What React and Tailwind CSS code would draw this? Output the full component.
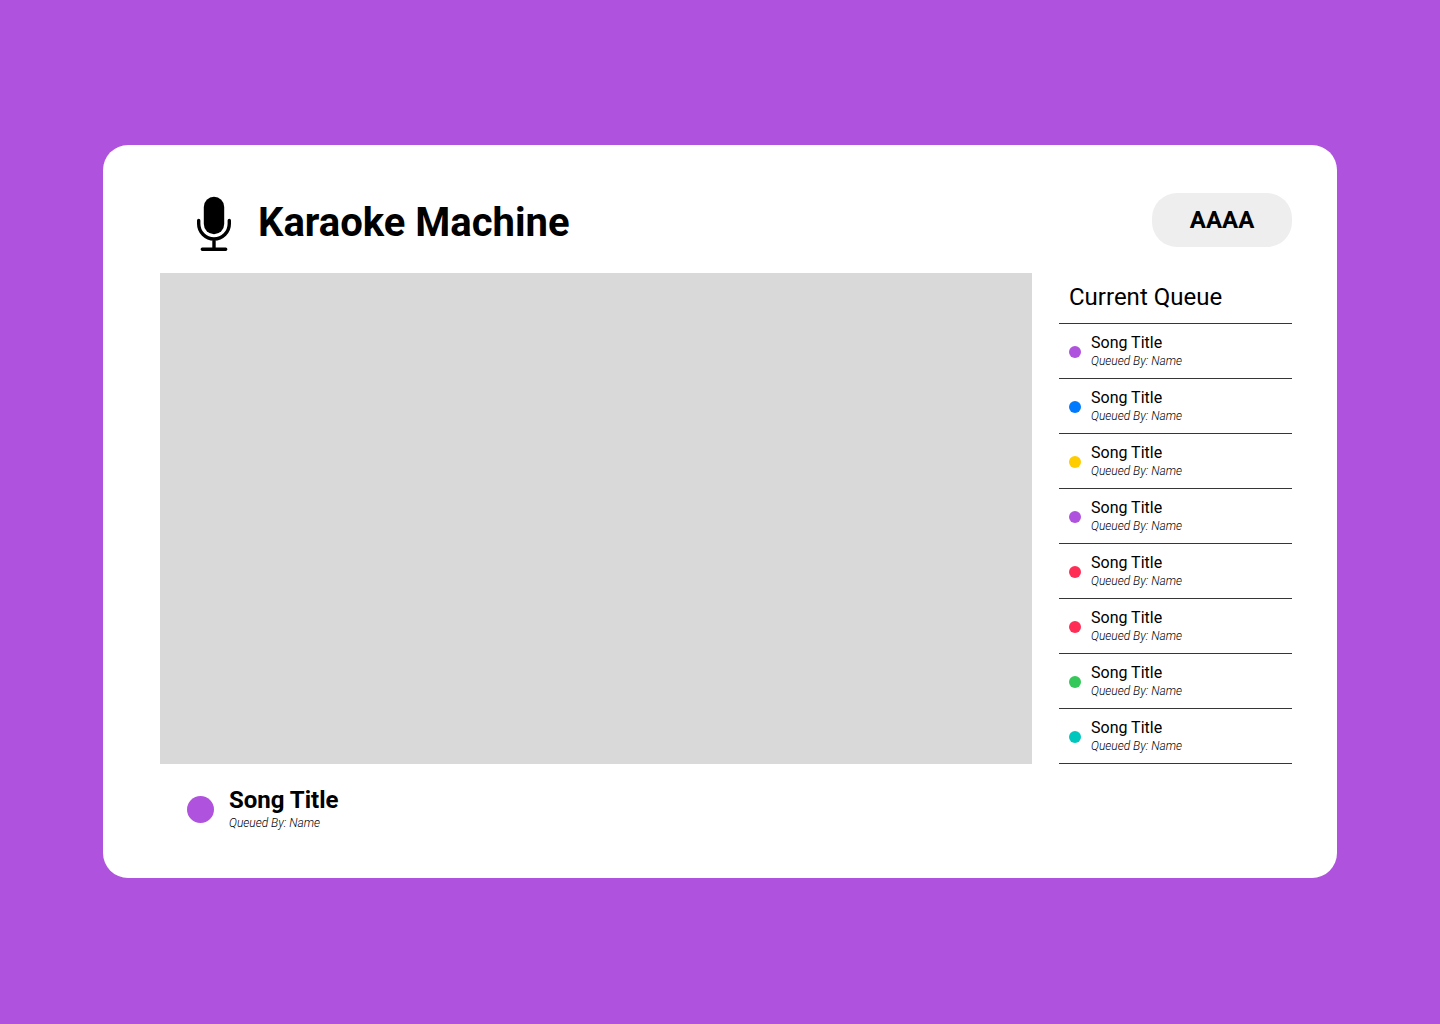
const queue = [
  "bg-[#af52de]",
  "bg-[#007aff]",
  "bg-[#ffcc00]",
  "bg-[#af52de]",
  "bg-[#ff2d55]",
  "bg-[#ff2d55]",
  "bg-[#34c759]",
  "bg-[#00c7be]",
].map((color, id) => ({ id, color, title: "Song Title", name: "Name" }));

function MicIcon() {
  return (
    <svg className="h-14 w-9 shrink-0" viewBox="0 0 36 56" fill="none" aria-hidden="true">
      <rect x="7.8" y="1.8" width="20.4" height="37.4" rx="10.2" fill="#000" />
      <path
        d="M2.7 25.5v3.2a15.3 15.3 0 0 0 30.6 0v-3.2M18 44v10M6.3 54.2h23.4"
        stroke="#000"
        strokeWidth="3.4"
        strokeLinecap="round"
      />
    </svg>
  );
}

function QueueItem({ song }) {
  return (
    <li className="flex h-[55px] items-center gap-2.5 border-b border-[#363636] px-2.5">
      <span className={`mt-0.5 size-3 shrink-0 rounded-full ${song.color}`} />
      <div>
        <p className="text-base leading-5">{song.title}</p>
        <p className="text-xs leading-4 font-light italic">Queued By: {song.name}</p>
      </div>
    </li>
  );
}

export default function App() {
  return (
    <div className="flex min-h-screen flex-col bg-[#af52de] px-[103px] py-[145px] font-['Roboto',sans-serif] text-black">
      <main className="rounded-[25px] bg-white pt-12 pr-[45px] pb-[47px] pl-[57px]">
        <header className="flex items-start justify-between pl-9">
          <div className="flex items-center gap-[26px] pt-0.5">
            <MicIcon />
            <h1 className="text-[40px] leading-[48px] font-bold">Karaoke Machine</h1>
          </div>
          <button
            type="button"
            className="h-[54px] w-[140px] rounded-[25px] bg-[#eeeeee] text-2xl font-bold"
          >
            AAAA
          </button>
        </header>

        <div className="mt-[22px] flex items-start gap-[27px]">
          <section className="min-w-0 flex-1" aria-label="Now playing">
            <div className="aspect-video bg-[#d9d9d9]" />
            <div className="mt-[21px] flex items-center gap-[15px] pl-[27px]">
              <span className="mt-1 size-[27px] shrink-0 rounded-full bg-[#af52de]" />
              <div>
                <h2 className="text-2xl leading-[30px] font-bold">Song Title</h2>
                <p className="text-xs leading-4 font-light italic">Queued By: Name</p>
              </div>
            </div>
          </section>

          <aside className="w-[233px] shrink-0">
            <h2 className="border-b border-[#363636] px-2.5 pt-2 pb-2.5 text-2xl leading-8">
              Current Queue
            </h2>
            <ul>
              {queue.map((song) => (
                <QueueItem key={song.id} song={song} />
              ))}
            </ul>
          </aside>
        </div>
      </main>
    </div>
  );
}
